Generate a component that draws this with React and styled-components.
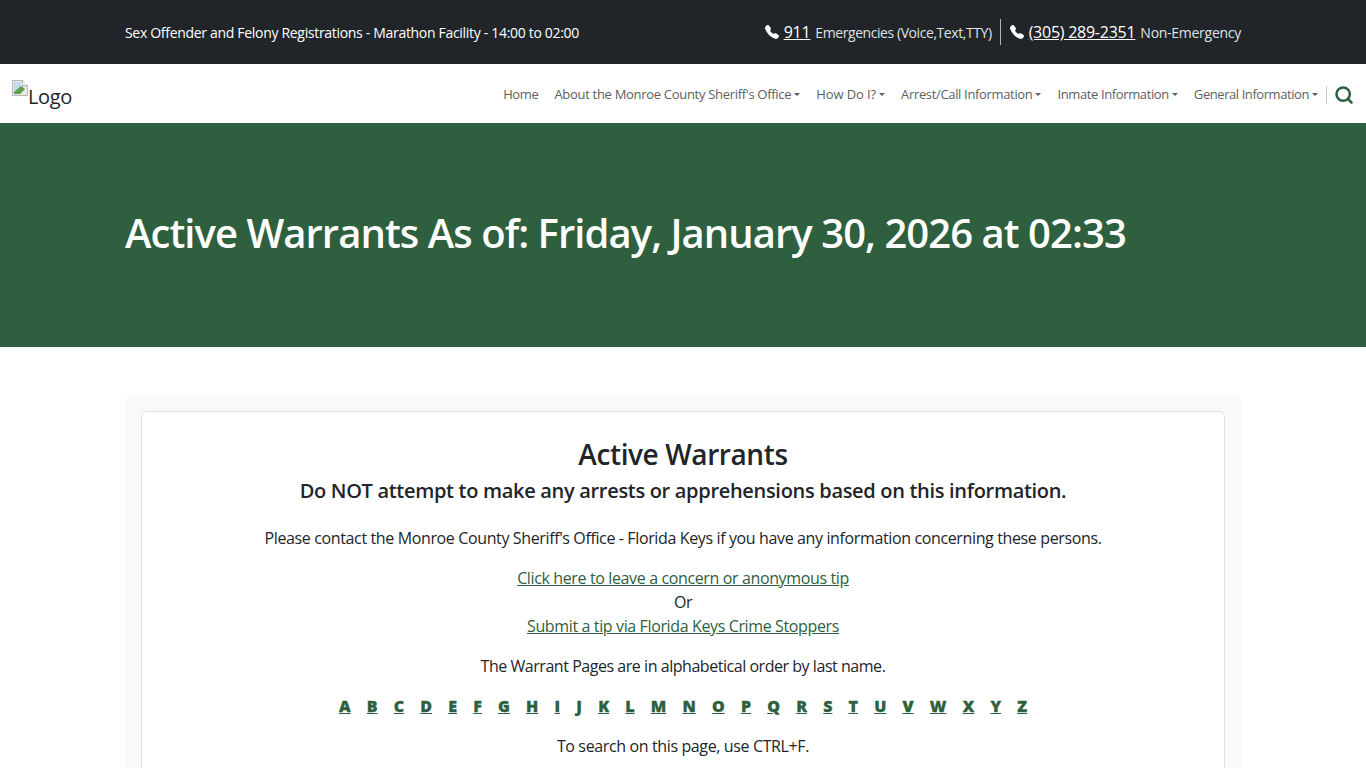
import React from 'react';
import styled, { createGlobalStyle } from 'styled-components';
import { BsTelephoneFill } from 'react-icons/bs';
import { Search } from 'lucide-react';

const GlobalStyle = createGlobalStyle`
	html, body {
		margin: 0;
		padding: 0;
		height: 768px;
		overflow: hidden;
		background: #fff;
		color: #212529;
		font-family: "Open Sans", "Noto Sans", sans-serif;
		font-size: 16px;
		line-height: 1.5;
	}
	* { box-sizing: border-box; }
`;

const TopBar = styled.div`
	background-color: #212529;
	height: 64px;
	color: #fff;
`;
const Container = styled.div`
	width: 1140px;
	margin: 0 auto;
	padding: 0 12px;
`;
const TopRow = styled(Container)`
	height: 100%;
	display: flex;
	align-items: center;
	justify-content: space-between;
`;
const Notice = styled.div`
	font-size: 14px;
	letter-spacing: -0.31px;
`;
const Contacts = styled.div`
	display: flex;
	align-items: center;
	font-size: 14px;
	color: #dee2e6;
`;
const Contact = styled.div`
	display: flex;
	align-items: center;
	gap: 5px;
	height: 26px;
	letter-spacing: ${p => p.$track};
	& + & {
		border-left: 1px solid #adb5bd;
		margin-left: 8px;
		padding-left: 9px;
	}
`;
const PhoneIcon = styled(BsTelephoneFill)`
	width: 14px;
	height: 14px;
	color: #fff;
`;
const PhoneLink = styled.a`
	color: #fff;
	font-size: 16px;
	text-decoration: underline;
	letter-spacing: -0.25px;
`;

const NavBar = styled.nav`
	height: 59px;
	display: flex;
	align-items: center;
	justify-content: space-between;
	padding: 0 12px;
`;
const LogoWrap = styled.div`
	display: flex;
	align-items: flex-start;
	height: 34px;
	font-size: 20px;
	letter-spacing: -0.4px;
	margin-top: 6px;
	line-height: 34px;
`;
const BrokenImage = styled.svg`
	width: 16px;
	height: 16px;
	flex-shrink: 0;
`;
const NavLinks = styled.div`
	display: flex;
	align-items: center;
	padding-top: 2px;
`;
const NavItem = styled.a`
	font-size: 13px;
	letter-spacing: ${p => p.$track || '-0.38px'};
	color: #5c5f62;
	padding: 0 8px;
	white-space: nowrap;
	display: flex;
	align-items: center;
`;
const Caret = styled.span`
	display: inline-block;
	margin-left: 3px;
	border-top: 3.5px solid #5c5f62;
	border-left: 3.5px solid transparent;
	border-right: 3.5px solid transparent;
`;
const SearchWrap = styled.div`
	display: flex;
	align-items: center;
	border-left: 1px solid #c5cdc8;
	height: 18px;
	padding-left: 7px;
	color: #2e5f3e;
`;

const Hero = styled.header`
	background-color: #2e5f3e;
	height: 224px;
	padding-bottom: 4px;
	display: flex;
	align-items: center;
	color: #fff;
`;
const HeroTitle = styled.h1`
	margin: 0;
	font-size: 40px;
	font-weight: 600;
	line-height: 1.2;
	letter-spacing: -0.95px;
`;

const Main = styled(Container)`
	padding-top: 48px;
`;
const OuterCard = styled.div`
	background-color: #f8f9fa;
	border-radius: 8px;
	padding: 16px;
`;
const InnerCard = styled.div`
	background-color: #fff;
	border: 1px solid #dfe2e5;
	border-radius: 6px;
	padding: 24px 16px;
	text-align: center;
`;
const CardTitle = styled.h2`
	margin: 0;
	font-size: 28px;
	font-weight: 600;
	line-height: 36px;
	letter-spacing: -0.4px;
`;
const CardSub = styled.h3`
	margin: 0 0 16px;
	font-size: 20px;
	font-weight: 600;
	line-height: 38px;
	letter-spacing: -0.31px;
`;
const Para = styled.p`
	margin: 0 0 16px;
	font-size: 16px;
	line-height: 24px;
	letter-spacing: ${p => p.$track || '-0.37px'};
`;
const TipLink = styled.a`
	color: #2e5f3e;
	text-decoration: underline;
`;
const Letters = styled.p`
	margin: 0 0 16px;
	display: flex;
	justify-content: center;
	gap: 16.2px;
	line-height: 24px;
`;
const Letter = styled.a`
	color: #2e5f3e;
	font-weight: 800;
	font-size: 16px;
	text-decoration: underline;
	-webkit-text-stroke: 0.3px #2e5f3e;
`;

const navItems = [
	{ label: 'Home' },
	{ label: "About the Monroe County Sheriff's Office", caret: true, track: '-0.3px' },
	{ label: 'How Do I?', caret: true, track: '-0.1px' },
	{ label: 'Arrest/Call Information', caret: true, track: '-0.34px' },
	{ label: 'Inmate Information', caret: true },
	{ label: 'General Information', caret: true, track: '-0.43px' },
];

export default function App() {
	return (
		<>
			<GlobalStyle />
			<TopBar>
				<TopRow>
					<Notice>Sex Offender and Felony Registrations - Marathon Facility - 14:00 to 02:00</Notice>
					<Contacts>
						<Contact $track="-0.43px">
							<PhoneIcon />
							<PhoneLink>911</PhoneLink>
							Emergencies (Voice,Text,TTY)
						</Contact>
						<Contact $track="-0.27px">
							<PhoneIcon />
							<PhoneLink>(305) 289-2351</PhoneLink>
							Non-Emergency
						</Contact>
					</Contacts>
				</TopRow>
			</TopBar>
			<NavBar>
				<LogoWrap>
					<BrokenImage viewBox="0 0 16 16">
						<path d="M.5.5h10l5 5v10H.5z" fill="#e9e9e9" stroke="#b4b4b4" />
						<path d="M10.5.5v5h5" fill="#fff" stroke="#b4b4b4" />
						<path d="M2 2h7v4h5L2 12z" fill="#c3d9ee" />
						<path d="M2 14v-2l7-6 4 3-5 5z" fill="#5fa04e" />
					</BrokenImage>
					<span>Logo</span>
				</LogoWrap>
				<NavLinks>
					{navItems.map(item => (
						<NavItem key={item.label} $track={item.track}>
							{item.label}
							{item.caret && <Caret />}
						</NavItem>
					))}
					<SearchWrap>
						<Search size={20} strokeWidth={3} />
					</SearchWrap>
				</NavLinks>
			</NavBar>
			<Hero>
				<Container>
					<HeroTitle>Active Warrants As of: Friday, January 30, 2026 at 02:33</HeroTitle>
				</Container>
			</Hero>
			<Main>
				<OuterCard>
					<InnerCard>
						<CardTitle>Active Warrants</CardTitle>
						<CardSub>Do NOT attempt to make any arrests or apprehensions based on this information.</CardSub>
						<Para>Please contact the Monroe County Sheriff's Office - Florida Keys if you have any information concerning these persons.</Para>
						<Para>
							<TipLink>Click here to leave a concern or anonymous tip</TipLink>
							<br />
							Or
							<br />
							<TipLink>Submit a tip via Florida Keys Crime Stoppers</TipLink>
						</Para>
						<Para $track="-0.46px">The Warrant Pages are in alphabetical order by last name.</Para>
						<Letters>
							{'ABCDEFGHIJKLMNOPQRSTUVWXYZ'.split('').map(l => (
								<Letter key={l}>{l}</Letter>
							))}
						</Letters>
						<Para>To search on this page, use CTRL+F.</Para>
					</InnerCard>
				</OuterCard>
			</Main>
		</>
	);
}
